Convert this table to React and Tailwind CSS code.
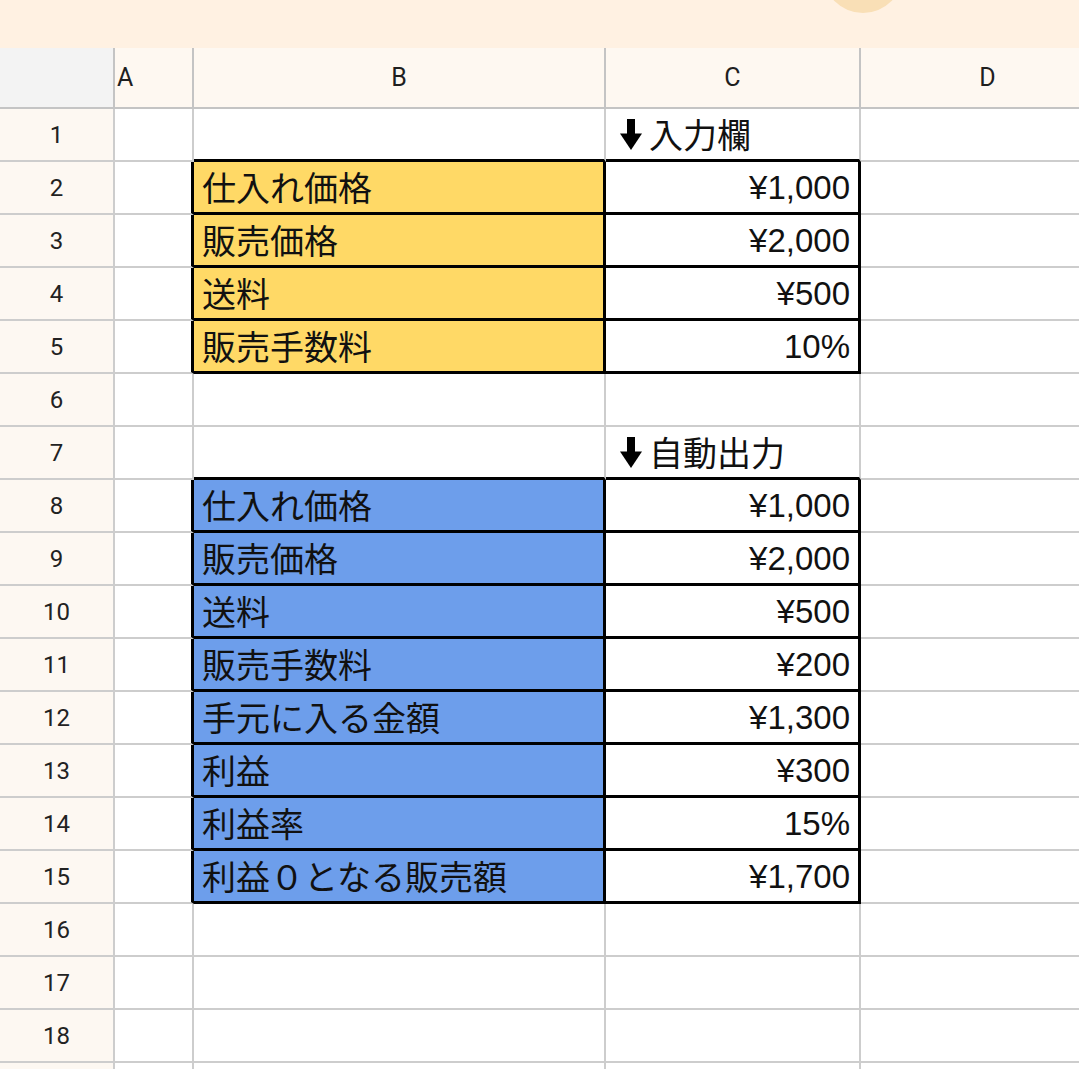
import React from "react";

const JP = "font-['Noto_Sans_CJK_JP',sans-serif]";
const NUM = "font-['Liberation_Sans','Noto_Sans_CJK_JP',sans-serif]";
const RB = "font-['Roboto',sans-serif]";

function Arrow() {
  return (
    <svg width="22" height="31" viewBox="0 0 22 31" className="mr-[7px] shrink-0">
      <rect x="7" y="0" width="8" height="16" fill="#000" />
      <polygon points="0,14.5 22,14.5 11,31" fill="#000" />
    </svg>
  );
}

const rows = [
  { n: 1, c: { head: "入力欄" } },
  { n: 2, b: "仕入れ価格", c: "¥1,000", color: "y" },
  { n: 3, b: "販売価格", c: "¥2,000", color: "y" },
  { n: 4, b: "送料", c: "¥500", color: "y" },
  { n: 5, b: "販売手数料", c: "10%", color: "y" },
  { n: 6 },
  { n: 7, c: { head: "自動出力" } },
  { n: 8, b: "仕入れ価格", c: "¥1,000", color: "b" },
  { n: 9, b: "販売価格", c: "¥2,000", color: "b" },
  { n: 10, b: "送料", c: "¥500", color: "b" },
  { n: 11, b: "販売手数料", c: "¥200", color: "b" },
  { n: 12, b: "手元に入る金額", c: "¥1,300", color: "b" },
  { n: 13, b: "利益", c: "¥300", color: "b" },
  { n: 14, b: "利益率", c: "15%", color: "b" },
  { n: 15, b: "利益０となる販売額", c: "¥1,700", color: "b" },
  { n: 16 },
  { n: 17 },
  { n: 18 },
  { n: 19, hide: true },
];

export default function App() {
  return (
    <div className="w-[1079px] h-[1069px] overflow-hidden bg-white relative">
      <div className="h-[48px] bg-[#fff1e2] relative overflow-hidden">
        <div className="absolute left-[823px] top-[-67px] w-[80px] h-[80px] rounded-full bg-[#f9dfb6]" />
      </div>
      <div className="grid grid-cols-[115px_79px_412px_255px_255px] w-[1116px]">
        <div className="h-[61px] bg-[#f3f3f3] border-r-2 border-b-2 border-[#c4c4c4]" />
        <div className={`h-[61px] bg-[#fef8f1] border-r-2 border-b-2 border-[#c4c4c4] flex items-center pl-[2px] text-[25px] text-[#1f1f1f] ${RB}`}>A</div>
        <div className={`h-[61px] bg-[#fef8f1] border-r-2 border-b-2 border-[#c4c4c4] flex items-center justify-center text-[25px] text-[#1f1f1f] ${RB}`}>B</div>
        <div className={`h-[61px] bg-[#fef8f1] border-r-2 border-b-2 border-[#c4c4c4] flex items-center justify-center text-[25px] text-[#1f1f1f] ${RB}`}>C</div>
        <div className={`h-[61px] bg-[#fef8f1] border-r-2 border-b-2 border-[#c4c4c4] flex items-center justify-center text-[25px] text-[#1f1f1f] ${RB}`}>D</div>
        {rows.map((r) => {
          const inTable = !!r.color;
          const isHead = r.c && typeof r.c === "object";
          const bg = r.color === "y" ? "bg-[#ffd966]" : r.color === "b" ? "bg-[#6d9eeb]" : "bg-white";
          const aR = inTable ? "border-r-[3px] border-r-black" : "border-r-2 border-r-[#cdcdcd]";
          const bcB = inTable || isHead ? "border-b-[3px] border-b-black" : "border-b-2 border-b-[#cdcdcd]";
          const bR = inTable ? "border-r-[3px] border-r-black" : "border-r-2 border-r-[#cdcdcd]";
          const cR = inTable ? "border-r-[3px] border-r-black" : "border-r-2 border-r-[#cdcdcd]";
          return (
            <React.Fragment key={r.n}>
              <div className={`h-[53px] bg-[#fdf8f2] border-r-2 border-b-2 border-[#cdcdcd] flex items-center justify-center text-[24px] text-[#222] ${RB}`}>
                {r.hide ? "" : r.n}
              </div>
              <div className={`h-[53px] bg-white border-b-2 border-b-[#cdcdcd] ${aR}`} />
              <div className={`h-[53px] ${bg} ${bR} ${bcB} flex items-center pl-[8px] text-[34px] leading-none text-[#111] ${JP}`}>
                {r.b || ""}
              </div>
              <div className={`h-[53px] bg-white ${cR} ${bcB} flex items-center ${isHead ? "pl-[14px]" : "justify-end pr-[8px]"} leading-none text-[#111] ${isHead ? `text-[34px] ${JP}` : `text-[33px] ${NUM}`}`}>
                {isHead ? (
                  <>
                    <Arrow />
                    <span>{r.c.head}</span>
                  </>
                ) : (
                  r.c || ""
                )}
              </div>
              <div className="h-[53px] bg-white border-r-2 border-b-2 border-[#cdcdcd]" />
            </React.Fragment>
          );
        })}
      </div>
    </div>
  );
}
